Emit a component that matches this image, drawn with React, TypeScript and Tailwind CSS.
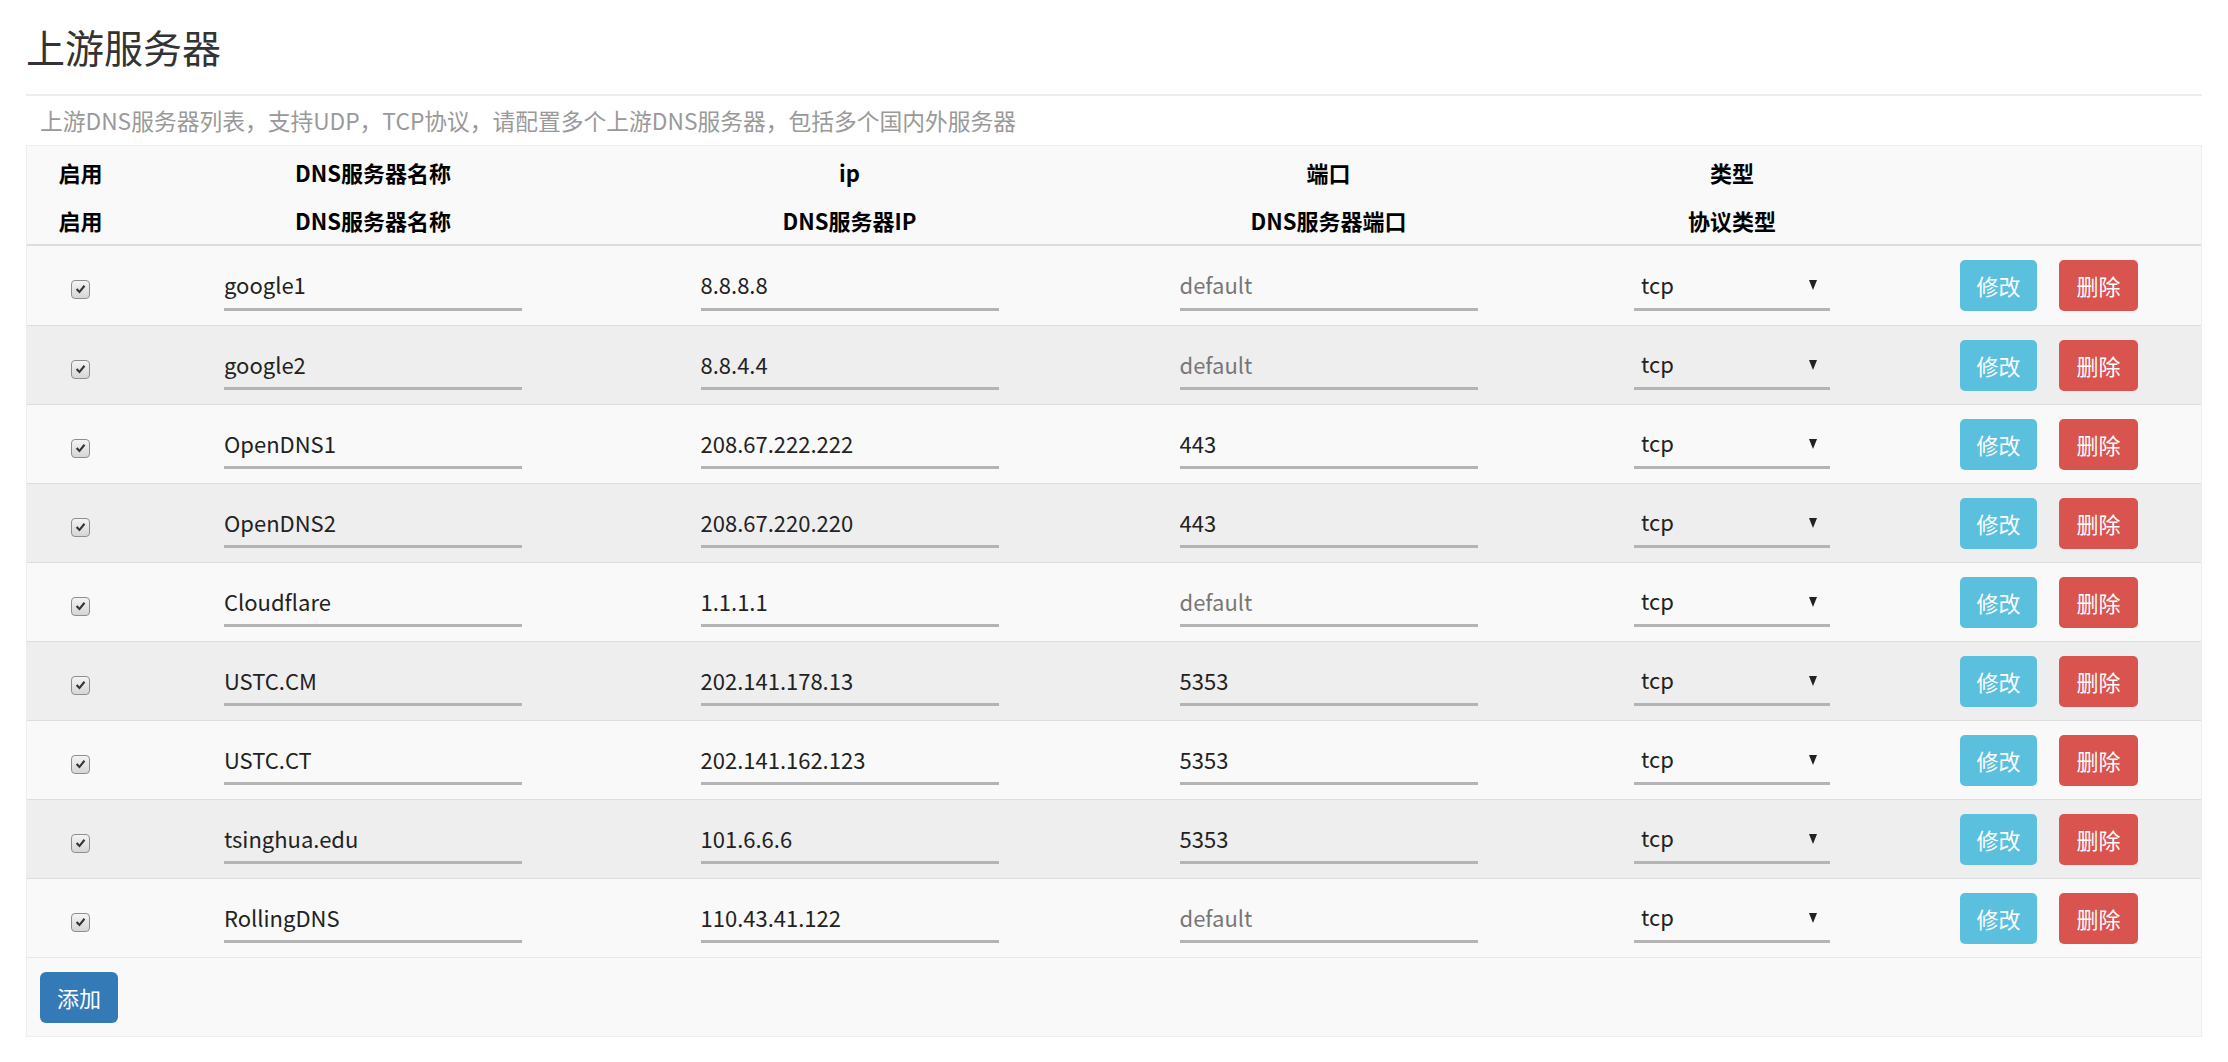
import React from "react"

interface Server {
  name: string
  ip: string
  port: string
}

const servers: Server[] = [
  { name: "google1", ip: "8.8.8.8", port: "" },
  { name: "google2", ip: "8.8.4.4", port: "" },
  { name: "OpenDNS1", ip: "208.67.222.222", port: "443" },
  { name: "OpenDNS2", ip: "208.67.220.220", port: "443" },
  { name: "Cloudflare", ip: "1.1.1.1", port: "" },
  { name: "USTC.CM", ip: "202.141.178.13", port: "5353" },
  { name: "USTC.CT", ip: "202.141.162.123", port: "5353" },
  { name: "tsinghua.edu", ip: "101.6.6.6", port: "5353" },
  { name: "RollingDNS", ip: "110.43.41.122", port: "" },
]

const cols = "grid grid-cols-[107px_478px_475px_483px_324px_1fr]"

function CheckBox() {
  return (
    <div className="mt-[8px] flex h-[19px] w-[19px] items-center justify-center rounded-[4px] border border-[#8e8e8e] bg-gradient-to-b from-[#f4f4f4] to-[#d6d6d6]">
      <svg viewBox="0 0 16 16" className="h-[13px] w-[13px]">
        <path d="M2.2 8.4 L4.4 6.6 L6.6 9.2 L11.9 2.6 L13.9 4.2 L6.8 13 Z" fill="#333" />
      </svg>
    </div>
  )
}

function TextInput({ value }: { value: string }) {
  return (
    <div className="flex justify-center pt-[10px]">
      <input
        defaultValue={value}
        placeholder="default"
        className="h-[40px] w-[298px] border-b-[3px] border-[#b4b4b4] bg-transparent pb-[10px] text-[22px] text-[#222] outline-none placeholder:text-[#777]"
      />
    </div>
  )
}

function Row({ s, i }: { s: Server; i: number }) {
  return (
    <div className={`${cols} h-[79px] items-center ${i > 0 ? "border-t border-[#dddddd]" : ""} ${i % 2 === 1 ? "bg-[#eeeeee]" : "bg-[#f9f9f9]"}`}>
      <div className="flex justify-center">
        <CheckBox />
      </div>
      <TextInput value={s.name} />
      <TextInput value={s.ip} />
      <TextInput value={s.port} />
      <div className="flex justify-center pt-[10px]">
        <div className="flex h-[40px] w-[196px] items-center justify-between border-b-[3px] border-[#b4b4b4] pb-[10px] pl-[7px] pr-[13px] text-[22px] text-[#222]">
          <span>tcp</span>
          <svg viewBox="0 0 8 10" className="mt-[2px] h-[10px] w-[8px]">
            <path d="M0 0 H8 L4 10 Z" fill="#222" />
          </svg>
        </div>
      </div>
      <div className="flex items-center justify-center gap-[22px] pl-[3px]">
        <button className="h-[51px] w-[77px] rounded-[5px] bg-[#5bc0de] text-[22px] text-white">修改</button>
        <button className="h-[51px] w-[79px] rounded-[5px] bg-[#d9534f] text-[22px] text-white">删除</button>
      </div>
    </div>
  )
}

export default function App() {
  return (
    <div className="min-h-screen bg-white px-[26px] font-['Noto_Sans_CJK_SC','Noto_Sans',sans-serif]">
      <h2 className="pt-[25px] text-[39px] leading-[43px] text-[#333]">上游服务器</h2>
      <div className="mt-[26px] h-[2px] bg-[#eeeeee]" />
      <p className="mt-[8px] pl-[14px] text-[22.75px] text-[#999]">
        上游DNS服务器列表，支持UDP，TCP协议，请配置多个上游DNS服务器，包括多个国内外服务器
      </p>

      <div className="mt-[7px] border border-[#eeeeee] bg-[#f9f9f9]">
        {/* Header */}
        <div className="border-b-2 border-[#dddddd] pt-[2px] text-[22px] font-bold text-black">
          <div className={`${cols} h-[48px] items-center text-center`}>
            <div>启用</div>
            <div>DNS服务器名称</div>
            <div>ip</div>
            <div>端口</div>
            <div>类型</div>
            <div />
          </div>
          <div className={`${cols} h-[48px] items-center text-center`}>
            <div>启用</div>
            <div>DNS服务器名称</div>
            <div>DNS服务器IP</div>
            <div>DNS服务器端口</div>
            <div>协议类型</div>
            <div />
          </div>
        </div>

        {/* Rows */}
        <div className="border-b border-[#e6e6e6]">
          {servers.map((s, i) => (
            <Row key={s.name} s={s} i={i} />
          ))}
        </div>

        {/* Footer */}
        <div className="px-[13px] pb-[13px] pt-[14px]">
          <button className="h-[51px] w-[78px] rounded-[6px] bg-[#337ab7] text-[22px] text-white">添加</button>
        </div>
      </div>
    </div>
  )
}
